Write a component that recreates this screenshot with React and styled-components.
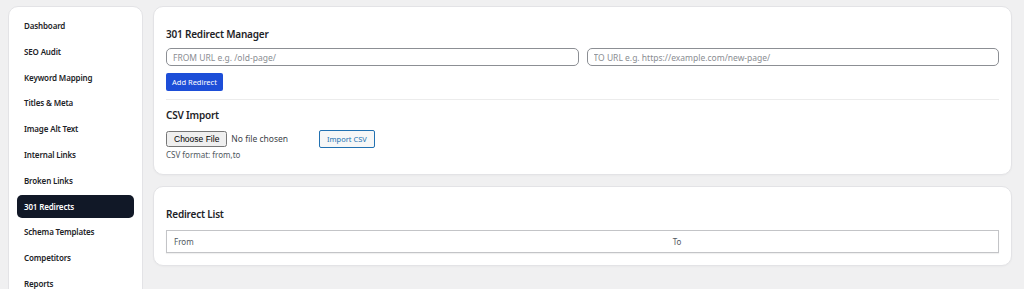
import React from 'react'
import styled, { createGlobalStyle } from 'styled-components'

const navItems = [
  'Dashboard',
  'SEO Audit',
  'Keyword Mapping',
  'Titles & Meta',
  'Image Alt Text',
  'Internal Links',
  'Broken Links',
  '301 Redirects',
  'Schema Templates',
  'Competitors',
  'Reports',
]

export default function App() {
  return (
    <>
      <GlobalStyle />
      <Layout>
        <Sidebar>
          {navItems.map(item => (
            <NavItem key={item} $active={item === '301 Redirects'}>{item}</NavItem>
          ))}
        </Sidebar>

        <Main>
          <Card $bottom={13}>
            <Title $space={6}>301 Redirect Manager</Title>
            <InputRow>
              <TextInput placeholder="FROM URL e.g. /old-page/" />
              <TextInput placeholder="TO URL e.g. https://example.com/new-page/" />
            </InputRow>
            <PrimaryButton>Add Redirect</PrimaryButton>
            <Divider />
            <Title $space={7}>CSV Import</Title>
            <ImportRow>
              <FileInput type="file" />
              <SecondaryButton>Import CSV</SecondaryButton>
            </ImportRow>
            <Hint>CSV format: from,to</Hint>
          </Card>

          <Card $bottom={12}>
            <Title $space={8}>Redirect List</Title>
            <Table>
              <thead>
                <tr>
                  <Th $width="60%">From</Th>
                  <Th>To</Th>
                </tr>
              </thead>
            </Table>
          </Card>
        </Main>
      </Layout>
    </>
  )
}

/**
 * --------------------------------------------------------
 * UI
 * --------------------------------------------------------
 */
const GlobalStyle = createGlobalStyle`
  html, body {
    margin: 0;
    background: #f0f0f1;
    font-family: "Noto Sans", "Open Sans", sans-serif;
    color: #1d2327;
  }
`

const Layout = styled.div`
  display: flex;
  align-items: flex-start;
  gap: 10px;
  padding: 6px 12px 0 8px;
`

const Sidebar = styled.nav`
  flex: 0 0 135px;
  box-sizing: border-box;
  display: flex;
  flex-direction: column;
  gap: 2.8px;
  padding: 7px 8px 20px;
  background: #fff;
  border: 1px solid #e3e3e6;
  border-radius: 10px;
`

const NavItem = styled.div`
  height: 23px;
  line-height: 23px;
  padding: 0 7px;
  border-radius: 5px;
  font-size: 8px;
  font-weight: 600;
  letter-spacing: -0.15px;
  color: ${p => (p.$active ? '#fff' : '#1d2327')};
  background: ${p => (p.$active ? '#111827' : 'transparent')};
`

const Main = styled.div`
  flex: 1;
  display: flex;
  flex-direction: column;
  gap: 11px;
`

const Card = styled.section`
  box-sizing: border-box;
  padding: 19px 12px ${p => p.$bottom}px;
  background: #fff;
  border: 1px solid #e3e3e6;
  border-radius: 10px;
  box-shadow: 0 1px 2px rgba(0, 0, 0, 0.03);
`

const Title = styled.h2`
  margin: 0 0 ${p => p.$space}px;
  font-size: 10px;
  font-weight: 600;
  line-height: 16px;
  letter-spacing: -0.2px;
  color: #1d2327;
`

const InputRow = styled.div`
  display: flex;
  gap: 8px;
  margin-bottom: 7px;
`

const TextInput = styled.input`
  flex: 1;
  min-width: 0;
  box-sizing: border-box;
  height: 18px;
  padding: 0 6px;
  border: 1px solid #8c8f94;
  border-radius: 5px;
  font-family: inherit;
  font-size: 8.5px;
  color: #2c3338;

  &::placeholder {
    color: #8a8d92;
  }
`

const PrimaryButton = styled.button`
  display: block;
  height: 18px;
  padding: 0 6px;
  border: 0;
  border-radius: 2px;
  background: #1d4ed8;
  color: #fff;
  font-family: inherit;
  font-size: 7.5px;
`

const Divider = styled.hr`
  margin: 8px 0 7px;
  border: 0;
  border-top: 1.5px solid #ececec;
`

const ImportRow = styled.div`
  display: flex;
  align-items: center;
  gap: 8px;
`

const FileInput = styled.input`
  width: 145px;
  font-family: inherit;
  font-size: 8.5px;
  color: #3c434a;
`

const SecondaryButton = styled.button`
  height: 18px;
  padding: 0 7px;
  border: 1px solid #2271b1;
  border-radius: 2px;
  background: #f6f7f7;
  color: #2271b1;
  font-family: inherit;
  font-size: 7.5px;
`

const Hint = styled.p`
  margin: 1px 0 0;
  font-size: 8px;
  line-height: 12px;
  color: #50575e;
`

const Table = styled.table`
  width: 100%;
  border-collapse: collapse;
  border: 1px solid #c3c4c7;
  box-shadow: 0 1px 1px rgba(0, 0, 0, 0.06);
`

const Th = styled.th`
  width: ${p => p.$width || 'auto'};
  height: 21px;
  padding: 0 7px;
  text-align: left;
  font-size: 8px;
  font-weight: 400;
  color: #50575e;
  border-bottom: 1px solid #c3c4c7;
`
